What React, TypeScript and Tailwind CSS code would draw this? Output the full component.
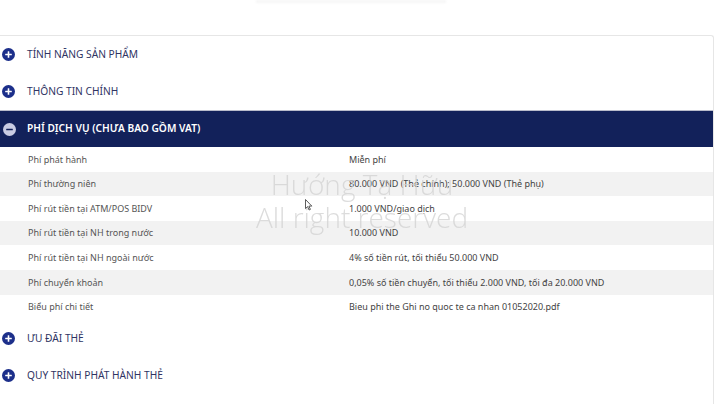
import React from "react";

const PlusIcon = () => (
  <svg width="13" height="13" viewBox="0 0 13 13" className="shrink-0">
    <circle cx="6.5" cy="6.5" r="6.5" fill="#1c2f8a" />
    <rect x="3.2" y="5.7" width="6.6" height="1.6" rx="0.4" fill="#fff" />
    <rect x="5.7" y="3.2" width="1.6" height="6.6" rx="0.4" fill="#fff" />
  </svg>
);

const MinusIcon = () => (
  <svg width="13" height="13" viewBox="0 0 13 13" className="shrink-0">
    <circle cx="6.5" cy="6.5" r="6.5" fill="#c9cce3" />
    <rect x="3.2" y="5.7" width="6.6" height="1.6" rx="0.4" fill="#13215a" />
  </svg>
);

const Section = ({ title }: { title: string }) => (
  <div className="flex items-center h-[37px] pl-[3px]">
    <PlusIcon />
    <span className="ml-[12px] text-[10.2px] text-[#2f3463] uppercase">{title}</span>
  </div>
);

const rows: [string, string][] = [
  ["Phí phát hành", "Miễn phí"],
  ["Phí thường niên", "80.000 VND (Thẻ chính); 50.000 VND (Thẻ phụ)"],
  ["Phí rút tiền tại ATM/POS BIDV", "1.000 VND/giao dịch"],
  ["Phí rút tiền tại NH trong nước", "10.000 VND"],
  ["Phí rút tiền tại NH ngoài nước", "4% số tiền rút, tối thiểu 50.000 VND"],
  ["Phí chuyển khoản", "0,05% số tiền chuyển, tối thiểu 2.000 VND, tối đa 20.000 VND"],
  ["Biểu phí chi tiết", "Bieu phi the Ghi no quoc te ca nhan 01052020.pdf"],
];

export default function App() {
  return (
    <div
      className="relative w-[720px] h-[404px] bg-white overflow-hidden"
      style={{ fontFamily: '"Noto Sans", "Open Sans", sans-serif' }}
    >
      <div className="flex justify-center">
        <div className="ml-[-18px] w-[190px] h-[3px] bg-[#f6f6f6] blur-[1px]" />
      </div>
      <div className="mt-[32px] w-[715px] ml-[-1px] border-t border-r border-[#e6e6e6] rounded-tr-[3px] h-[400px]">
        <Section title="Tính năng sản phẩm" />
        <Section title="Thông tin chính" />
        <div className="flex items-center h-[37px] pl-[4px] bg-[#12215a] border-t border-[#b9bccb]">
          <MinusIcon />
          <span className="ml-[11px] text-[10.2px] font-semibold text-white uppercase">
            Phí dịch vụ (chưa bao gồm VAT)
          </span>
        </div>
        <div className="text-[9px] text-[#444]">
          {rows.map(([a, b], i) => (
            <div
              key={a}
              className={`flex items-center h-[24.6px] ${i % 2 === 1 ? "bg-[#f2f2f2]" : "bg-white"}`}
            >
              <div className="w-[350px] shrink-0 pl-[29px] text-[#555]">{a}</div>
              <div className="flex-1">{b}</div>
            </div>
          ))}
        </div>
        <div className="h-[1px]" />
        <Section title="Ưu đãi thẻ" />
        <Section title="Quy trình phát hành thẻ" />
      </div>

      {/* watermark */}
      <div
        className="absolute left-[222px] top-[168px] w-[280px] text-center text-[28px] leading-[33px] text-[#d4d4d4] opacity-80 pointer-events-none"
        style={{ fontFamily: '"Open Sans", sans-serif', fontWeight: 300 }}
      >
        <div>Hướng Tạ Hữu</div>
        <div>All right reserved</div>
      </div>

      {/* cursor */}
      <svg className="absolute left-[305px] top-[199px]" width="8" height="12" viewBox="0 0 8 12">
        <path d="M0.5 0.5 L0.5 9.5 L2.6 7.6 L4.1 11 L5.4 10.4 L3.9 7.1 L6.8 7.1 Z" fill="#fff" stroke="#333" strokeWidth="0.8" />
      </svg>
    </div>
  );
}
